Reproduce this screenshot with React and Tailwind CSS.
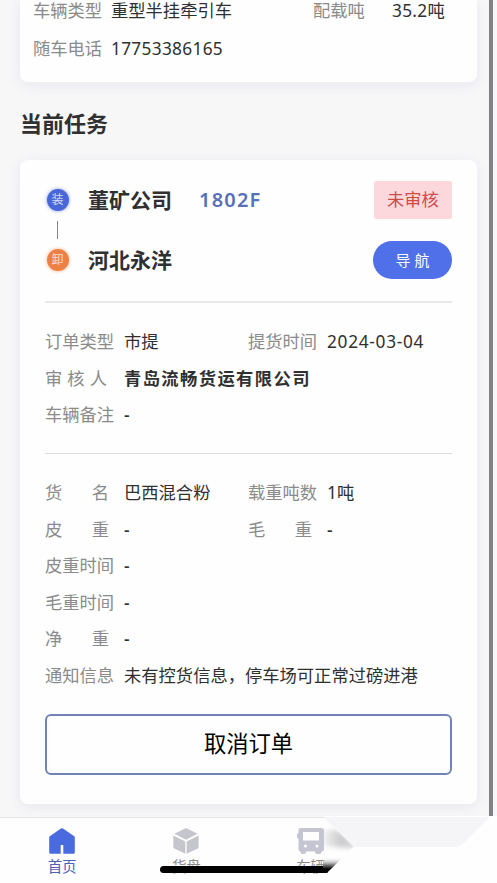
import clsx from 'clsx';

const orderRows = [
    [
        { label: '订单类型', value: '市提' },
        { label: '提货时间', value: '2024-03-04' },
    ],
    [{ label: '审核人', value: '青岛流畅货运有限公司', bold: true, spread: 'w-[62px]' }],
    [{ label: '车辆备注', value: '-' }],
];

const cargoRows = [
    [
        { label: '货名', value: '巴西混合粉', spread: 'w-[64px]' },
        { label: '载重吨数', value: '1吨' },
    ],
    [
        { label: '皮重', value: '-', spread: 'w-[64px]' },
        { label: '毛重', value: '-', spread: 'w-[64px]' },
    ],
    [{ label: '皮重时间', value: '-' }],
    [{ label: '毛重时间', value: '-' }],
    [{ label: '净重', value: '-', spread: 'w-[64px]' }],
    [{ label: '通知信息', value: '未有控货信息，停车场可正常过磅进港' }],
];

function Field({ item, first }) {
    return (
        <div className={clsx('flex items-center whitespace-nowrap', first && 'w-[203px]')}>
            <span className="w-[79px] shrink-0 text-[#8b8b8b]">
                {item.spread ? (
                    <span className={clsx('flex justify-between', item.spread)}>
                        {item.label.split('').map((char) => (
                            <span key={char}>{char}</span>
                        ))}
                    </span>
                ) : (
                    item.label
                )}
            </span>
            <span
                className={clsx(
                    'text-[#303030]',
                    item.bold && 'font-bold tracking-[1.4px]',
                    /^\d{4}/.test(item.value) && 'tracking-[0.7px]',
                    item.value === '-' && 'font-medium'
                )}
            >
                {item.value}
            </span>
        </div>
    );
}

function FieldList({ rows }) {
    return (
        <div className="text-[17.3px] leading-[36.6px]">
            {rows.map((row) => (
                <div key={row[0].label} className="flex">
                    {row.map((item, i) => (
                        <Field key={item.label} item={item} first={i === 0} />
                    ))}
                </div>
            ))}
        </div>
    );
}

function StopBadge({ text, color }) {
    return (
        <span
            className={clsx(
                'flex h-[22px] w-[22px] items-center justify-center rounded-full text-[12px] leading-none text-white/75',
                color
            )}
        >
            {text}
        </span>
    );
}

function HomeIcon() {
    return (
        <svg width="26" height="26" viewBox="0 0 26 26" fill="#4a6ae0">
            <path d="M12 .6a1.800 1.800 0 0 1 2 0l11.200 7.600c.4.300.6.700.6 1.200V24.600a1.200 1.200 0 0 1-1.200 1.200H14.300v-8.800h-2.600v8.800H1.400A1.200 1.200 0 0 1 .2 24.600V9.400c0-.5.200-.9.600-1.200z" />
        </svg>
    );
}

function BoxIcon() {
    return (
        <svg width="26" height="26" viewBox="0 0 26 26" fill="#c5c5cd">
            <path d="M12 .5a2 2 0 0 1 2 0l10.600 5.300L13 11.800 1.400 5.800z" />
            <path d="M.3 7.400 12.300 13.400v12.400L1.300 20.600a1.800 1.800 0 0 1-1-1.600z" />
            <path d="M25.700 7.400 13.700 13.400v12.400l11-5.200a1.800 1.800 0 0 0 1-1.600z" />
        </svg>
    );
}

function TruckIcon() {
    return (
        <svg width="27" height="26" viewBox="0 0 27 26" fill="#c5c5d2">
            <path
                fillRule="evenodd"
                d="M3.500 0h21A2.500 2.500 0 0 1 27 2.500v19a2 2 0 0 1-2 2h-.5V24a2 2 0 0 1-2 2H20a2 2 0 0 1-2-2v-.500H9V24a2 2 0 0 1-2 2H5.500a2 2 0 0 1-2-2v-.500a2 2 0 0 1-2-2V10.500A1.500 1.500 0 0 1 0 9V6.500A1.500 1.500 0 0 1 1.500 5V2a2 2 0 0 1 2-2zM6 4v8.500h16V4zM8.500 16.500a1.500 1.500 0 1 0 0 3 1.500 1.500 0 0 0 0-3zM20 16.500a1.500 1.500 0 1 0 0 3 1.500 1.500 0 0 0 0-3z"
            />
        </svg>
    );
}

// light panel and bright fade lying over the right half of the tab bar
function CornerFade() {
    return (
        <svg className="absolute right-0 bottom-0" width="180" height="67" viewBox="317 816 180 67">
            <defs>
                <linearGradient id="fadeTop" x1="0" x2="1" y1="0" y2="0">
                    <stop offset="0" stopColor="#d0d0d2" stopOpacity="0.2" />
                    <stop offset="0.5" stopColor="#cacacc" />
                    <stop offset="1" stopColor="#dcdcde" />
                </linearGradient>
                <linearGradient id="fadeBottom" x1="0" x2="0" y1="0" y2="1">
                    <stop offset="0" stopColor="#fff" stopOpacity="0" />
                    <stop offset="0.4" stopColor="#aaa" />
                    <stop offset="0.75" stopColor="#000" />
                </linearGradient>
                <clipPath id="wedge">
                    <path d="M323 817L354 846L327 873H323z" />
                </clipPath>
                <filter id="soft" x="-20%" y="-20%" width="140%" height="140%">
                    <feGaussianBlur stdDeviation="2.500" />
                </filter>
            </defs>
            <path d="M324 816H497V883H320V873H327L354 846z" fill="#fefefe" />
            <g clipPath="url(#wedge)">
                <path d="M322 830H338L360 849L322 846z" fill="url(#fadeTop)" filter="url(#soft)" />
                <path d="M323 857H346L327 873H323z" fill="url(#fadeBottom)" />
            </g>
            <path d="M323 817H490L466 841Q460 847 452 847H354z" fill="#f5f5f7" />
        </svg>
    );
}

const tabs = [
    { name: '首页', icon: HomeIcon, active: true },
    { name: '货盘', icon: BoxIcon },
    { name: '车辆', icon: TruckIcon },
];

export default function App() {
    return (
        <div className="relative flex h-[883px] w-[497px] flex-col overflow-hidden bg-[#f7f7f8] font-['Noto_Sans','Noto_Sans_CJK_SC',sans-serif]">
            <div className="flex h-[817px] shrink-0">
                <main className="w-[489px] px-5 pr-3">
                    <section className="h-[82px] rounded-b-lg bg-[#fefefe] px-[13px] text-[17.3px] shadow-[0_3px_14px_rgba(80,80,150,0.09)]">
                        <div className="flex leading-[21px] whitespace-nowrap">
                            <span className="w-[78px] text-[#8b8b8b]">车辆类型</span>
                            <span className="w-[202px] text-[#303030]">重型半挂牵引车</span>
                            <span className="w-[79px] text-[#8b8b8b]">配载吨</span>
                            <span className="tracking-[0.3px] text-[#303030]">35.2吨</span>
                        </div>
                        <div className="flex leading-[56px]">
                            <span className="w-[78px] text-[#8b8b8b]">随车电话</span>
                            <span className="tracking-[0.3px] text-[#303030]">17753386165</span>
                        </div>
                    </section>

                    <h2 className="flex h-[78px] items-center pt-[5px] text-[22px] font-bold text-[#303030]">当前任务</h2>

                    <section className="flex h-[644px] flex-col rounded-lg bg-[#fefefe] px-[25px] shadow-[0_3px_14px_rgba(80,80,150,0.09)]">
                        <div className="flex h-[143px] border-b-2 border-[#e9e9ec] pt-[21px]">
                            <div className="flex w-[25px] flex-col items-center pt-2">
                                <StopBadge text="装" color="bg-[#4967d8] shadow-[0_0_3px_1px_#b8c4f6]" />
                                <span className="my-[10px] h-[18px] w-px bg-[#858585]" />
                                <StopBadge text="卸" color="bg-[#ed8145] shadow-[0_0_3px_1px_#fbd0b5]" />
                            </div>
                            <div className="ml-[18px] text-[21px] leading-[38px] font-bold text-[#303030]">
                                <div className="flex">
                                    <span className="w-[111px]">董矿公司</span>
                                    <span className="text-[20px] font-semibold tracking-[1.2px] text-[#5870b8]">1802F</span>
                                </div>
                                <div className="mt-[22px]">河北永洋</div>
                            </div>
                            <div className="ml-auto flex flex-col items-end">
                                <span className="flex h-[38px] w-[78px] items-center justify-center rounded-xs bg-[#fcd8dc] text-[17.25px] text-[#cf4b4b]">
                                    未审核
                                </span>
                                <button className="mt-[22px] h-[38px] w-[79px] rounded-full bg-[#4f70e8] text-[15px] text-white">
                                    导 航
                                </button>
                            </div>
                        </div>

                        <div className="h-[151px] border-b border-[#dedee1] pt-[21px]">
                            <FieldList rows={orderRows} />
                        </div>

                        <div className="pt-[21px]">
                            <FieldList rows={cargoRows} />
                        </div>

                        <button className="mt-[19px] h-[61px] shrink-0 rounded-md border-2 border-[#7184b8] text-[22.300px] text-black">
                            取消订单
                        </button>
                    </section>
                </main>
                <div className="w-1 bg-[#828284]" />
            </div>

            <nav className="flex h-[66px] shrink-0 border-t border-[#e4e4e6] bg-[#fefefe]">
                {tabs.map(({ name, icon: Icon, active }) => (
                    <div key={name} className="flex w-1/4 flex-col items-center pt-[10px]">
                        <Icon />
                        <span className={clsx('mt-px text-[14.500px] leading-[22px]', active ? 'text-[#4a62b8]' : 'text-[#8b8b8b]')}>
                            {name}
                        </span>
                    </div>
                ))}
            </nav>

            <div className="absolute bottom-[10px] left-[160px] h-[7px] w-[168px] rounded-l-full bg-black" />
            <CornerFade />
        </div>
    );
}
